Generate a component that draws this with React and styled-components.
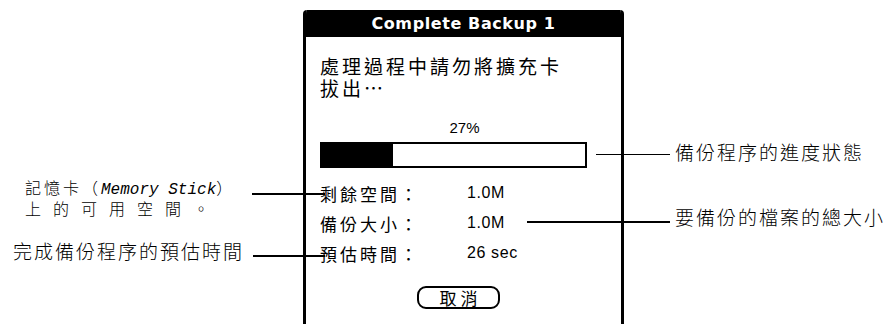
import React from 'react';
import styled, { createGlobalStyle } from 'styled-components';

const GlobalStyle = createGlobalStyle`
  html, body {
    margin: 0;
    padding: 0;
    background: #fff;
    overflow: hidden;
  }
`;

const cjk = `"Noto Sans CJK TC", "Noto Sans", sans-serif`;

const Stage = styled.div`
  display: grid;
  grid-template-columns: 303px 321px 1fr;
  width: 889px;
  height: 324px;
  overflow: hidden;
  color: #000;
`;

const NoteColumn = styled.div`
  display: flex;
  flex-direction: column;
  padding-top: ${(p) => p.$top}px;
  padding-left: ${(p) => p.$left || 0}px;
`;

const Note = styled.div`
  position: relative;
  margin-top: ${(p) => p.$gap || 0}px;
  padding-left: ${(p) => p.$indent || 0}px;
  font-family: ${cjk};
  font-weight: 300;
  font-size: ${(p) => p.$size || 19}px;
  line-height: ${(p) => p.$lh || 22}px;
  letter-spacing: ${(p) => p.$ls ?? 2}px;
  white-space: nowrap;
`;

const Wide = styled.span`
  letter-spacing: ${(p) => p.$ls}px;
`;

const Latin = styled.span`
  font-family: "Liberation Mono", "DejaVu Sans Mono", monospace;
  font-style: italic;
  font-size: 16px;
  letter-spacing: 0;
`;

const Leader = styled.span`
  position: absolute;
  top: ${(p) => p.$top}px;
  left: ${(p) => p.$left}px;
  width: ${(p) => p.$width}px;
  height: ${(p) => p.$thick || 2}px;
  background: #000;
`;

const Panel = styled.div`
  margin-top: 10px;
  border-left: 3px solid #000;
  border-right: 3px solid #000;
  border-radius: 4px 4px 0 0;
  background: #fff;
  overflow: hidden;
`;

const TitleBar = styled.div`
  height: 27px;
  background: #000;
  color: #fff;
  text-align: center;
  font-family: "DejaVu Sans", "Liberation Sans", sans-serif;
  font-weight: bold;
  font-size: 16px;
  line-height: 27px;
  letter-spacing: 0.6px;
`;

const Body = styled.div`
  padding: 18px 0 0 14px;
`;

const Message = styled.div`
  font-family: ${cjk};
  font-size: 19px;
  line-height: 22px;
  letter-spacing: 3px;
`;

const Percent = styled.div`
  margin: 21px 0 0 -12px;
  text-align: center;
  font-family: "Liberation Sans", Arial, sans-serif;
  font-size: 15px;
  line-height: 16px;
`;

const Bar = styled.div`
  margin-top: 6px;
  width: 267px;
  height: 26px;
  box-sizing: border-box;
  border: 2px solid #000;
  background: #fff;
`;

const BarFill = styled.div`
  height: 100%;
  background: #000;
`;

const InfoGrid = styled.div`
  display: grid;
  grid-template-columns: 147px auto;
  grid-auto-rows: 30px;
  align-items: center;
  margin-top: 10px;
`;

const Label = styled.div`
  font-family: ${cjk};
  font-size: 17px;
  letter-spacing: 3px;
`;

const Value = styled.div`
  font-family: "Liberation Sans", Arial, sans-serif;
  font-size: 16px;
  letter-spacing: 0.6px;
`;

const CancelButton = styled.button`
  display: block;
  margin: 18px 0 0 97px;
  width: 83px;
  height: 23px;
  padding: 0 0 0 4px;
  border: 2px solid #000;
  border-radius: 9px;
  background: #fff;
  color: #000;
  font-family: ${cjk};
  font-size: 17px;
  line-height: 19px;
  letter-spacing: 4px;
`;

const progress = 27;

export default function App() {
  return (
    <>
      <GlobalStyle />
      <Stage>
        <NoteColumn $top={178}>
          <Note $indent={25} $size={16} $lh={18} $ls={3}>
            記憶卡（<Latin>Memory Stick</Latin>）
            <br />
            <Wide $ls={12}>上的可用空間。</Wide>
            <Leader $top={15} $left={252} $width={73} />
          </Note>
          <Note $indent={13} $gap={23}>
            完成備份程序的預估時間
            <Leader $top={15} $left={253} $width={72} />
          </Note>
        </NoteColumn>

        <Panel>
          <TitleBar>Complete Backup 1</TitleBar>
          <Body>
            <Message>
              處理過程中請勿將擴充卡
              <br />
              拔出…
            </Message>
            <Percent>{progress}%</Percent>
            <Bar>
              <BarFill style={{ width: `${progress}%` }} />
            </Bar>
            <InfoGrid>
              <Label>剩餘空間：</Label>
              <Value>1.0M</Value>
              <Label>備份大小：</Label>
              <Value>1.0M</Value>
              <Label>預估時間：</Label>
              <Value>26 sec</Value>
            </InfoGrid>
            <CancelButton>取消</CancelButton>
          </Body>
        </Panel>

        <NoteColumn $top={141} $left={51}>
          <Note>
            備份程序的進度狀態
            <Leader $top={13} $left={-79} $width={74} $thick={1} />
          </Note>
          <Note $gap={43}>
            要備份的檔案的總大小
            <Leader $top={15} $left={-148} $width={143} />
          </Note>
        </NoteColumn>
      </Stage>
    </>
  );
}
